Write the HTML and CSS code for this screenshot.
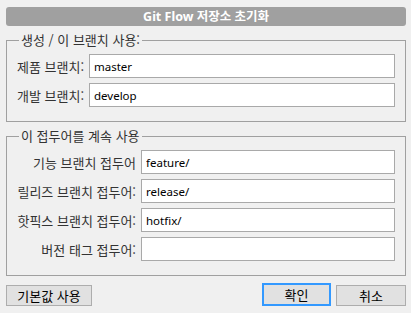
FILE: index.html
```html
<!DOCTYPE html>
<html lang="ko">
<head>
    <meta charset="UTF-8">
    <title>Git Flow 저장소 초기화</title>
    <link rel="stylesheet" href="styles.css">
</head>
<body>
    <div class="dialog">
        <div class="title">Git Flow 저장소 초기화</div>

        <fieldset class="group branches">
            <legend>생성 / 이 브랜치 사용:</legend>
            <label for="prod">제품 브랜치:</label>
            <input type="text" id="prod" value="master">
            <label for="dev">개발 브랜치:</label>
            <input type="text" id="dev" value="develop">
        </fieldset>

        <fieldset class="group prefixes">
            <legend>이 접두어를 계속 사용</legend>
            <label for="feature">기능 브랜치 접두어</label>
            <input type="text" id="feature" value="feature/">
            <label for="release">릴리즈 브랜치 접두어:</label>
            <input type="text" id="release" value="release/">
            <label for="hotfix">핫픽스 브랜치 접두어:</label>
            <input type="text" id="hotfix" value="hotfix/">
            <label for="tag">버전 태그 접두어:</label>
            <input type="text" id="tag" value="">
        </fieldset>

        <div class="buttons">
            <button type="button" class="btn-defaults">기본값 사용</button>
            <div class="spacer"></div>
            <button type="button" class="btn-ok">확인</button>
            <button type="button" class="btn-cancel">취소</button>
        </div>
    </div>
</body>
</html>
```

FILE: styles.css
```css
body {
    margin: 0;
    background-color: #f0f0f0;
    color: #1e1e1e;
    font-family: "Noto Sans", "Noto Sans CJK KR", sans-serif;
    font-size: 12px;
}
.dialog {
    padding: 7px 5px 0 6px;
}
.title {
    height: 19px;
    line-height: 19px;
    background-color: #a0a0a0;
    border-radius: 3px;
    color: #fff;
    font-weight: bold;
    font-size: 12.5px;
    text-align: center;
}
.group {
    margin: 6px 0 0 0;
    padding: 6px 10px 14px 10px;
    border: 1px solid #a0a0a0;
    display: grid;
    row-gap: 5px;
    column-gap: 5px;
    align-items: center;
}
/* 한글 라벨은 조금 크게 */
.group legend,
label,
button {
    font-family: "Noto Sans CJK KR", sans-serif;
    font-size: 13px;
}
.group legend {
    padding: 0 2px;
    margin-left: 2px;
    line-height: 16px;
    color: #333;
}
.branches {
    grid-template-columns: 67px 1fr;
}
.prefixes {
    grid-template-columns: 119px 1fr;
}
label {
    color: #333;
    white-space: nowrap;
}
.prefixes label {
    text-align: right;
}
input {
    height: 24px;
    box-sizing: border-box;
    border: 1px solid #a9a9a9;
    background-color: #fff;
    padding: 0 4px;
    font-family: "Noto Sans", sans-serif;
    font-size: 11.5px;
    color: #000;
    margin: 0;
}
.buttons {
    display: flex;
    align-items: flex-end;
    gap: 5px;
    margin-top: 7px;
}
.spacer {
    flex: 1;
}
button {
    height: 21px;
    padding: 0;
    border: 1px solid #adadad;
    background-color: #e1e1e1;
    color: #000;
}
.btn-defaults {
    width: 86px;
}
.btn-ok {
    width: 69px;
    height: 23px;
    border: 2px solid #3399ff;
}
.btn-cancel {
    width: 70px;
}
```
